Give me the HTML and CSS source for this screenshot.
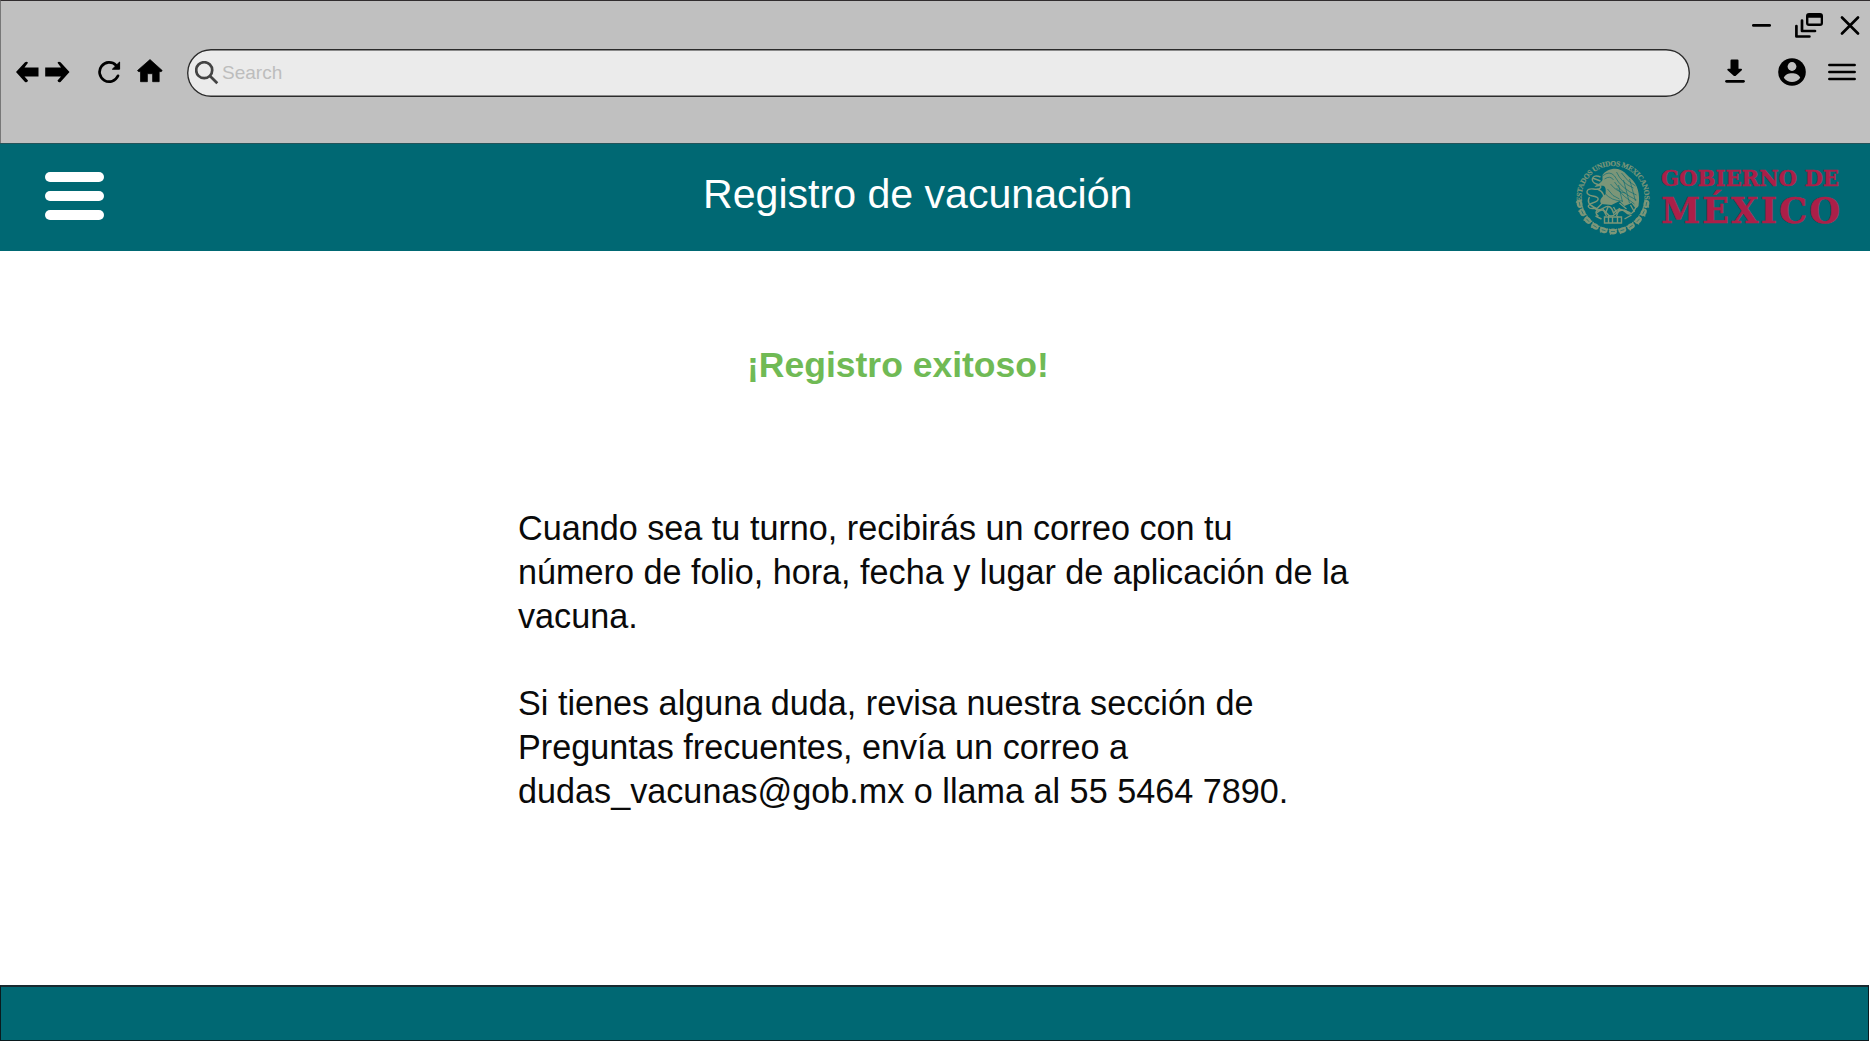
FILE: index.html
```html
<!DOCTYPE html>
<html lang="es">
<head>
<meta charset="utf-8">
<title>Registro de vacunación</title>
<link rel="stylesheet" href="styles.css">
</head>
<body>
<div class="page">
  <div class="browser">
    <div class="window-controls">
      <svg width="19" height="28" viewBox="0 0 19 28"><path d="M1.3 14.4h16.4" class="line"/></svg>
      <svg width="28" height="28" viewBox="0 0 28 28"><path fill-rule="evenodd" d="M14 2h11a3 3 0 0 1 3 3v7a3 3 0 0 1-3 3H14a3 3 0 0 1-3-3V5a3 3 0 0 1 3-3zM13.400 6.700V12.600H25.700V6.700z"/><path d="M7 9.500v10.500h13M1.400 15v10.500h13" class="line"/></svg>
      <svg width="20" height="28" viewBox="0 0 20 28"><path d="M2 6.500 18 22.500M18 6.500 2 22.500" class="line"/></svg>
    </div>
    <div class="toolbar">
      <svg class="arrows" width="54" height="22" viewBox="0 0 54 22"><path d="M0 11 9 1.200Q11 0 12 1.800L8.500 6.500H22.500V15.500H8.500L12 19.500Q11.500 22 9 21z"/><path d="M53.500 11 44.500 1.200Q42.500 0 41.500 1.800L45 6.500H29.200V15.500H45L41.500 19.500Q42 22 44.500 21z"/></svg>
      <svg class="reload" width="24" height="24" viewBox="0 0 24 24"><path d="M20 15.800A9.600 9.600 0 1 1 18 5.300L20 7.400" class="line"/><path d="M21.600 2V9.200H14.400z" stroke="#000" stroke-linejoin="round"/></svg>
      <svg class="home" width="26" height="24" viewBox="0 0 26 24"><path d="M13 0.500 25.200 11.500Q25 13 22.200 12.700V22.700H15.600V14.700H10.400V22.700H3.500V12.700Q.8 13 .5 11.500z" stroke="#000" stroke-linejoin="round" stroke-width=".7"/></svg>
      <div class="search">
        <svg width="24" height="24" viewBox="0 0 24 24"><circle cx="9.200" cy="9.200" r="8" class="glass"/><path d="M15 15l7.300 7.300" class="glass"/></svg>
        <span>Search</span>
      </div>
      <svg class="download" width="20" height="24" viewBox="0 0 20 24"><path d="M5.500 1.500Q5.500.6 6.500.6h6q1 0 1 .9V9.700h2.800q1.200.4.500 1.500L10.500 17h-1.500L2.500 11.200q-.7-1.100.5-1.500H5.500z"/><path d="M1.500 22.300h17" class="line"/></svg>
      <svg class="user" width="28" height="28" viewBox="0 0 28 28"><circle cx="14" cy="14" r="13.800"/><circle cx="14" cy="8.500" r="4.400" class="hole"/><path class="hole" d="M5.800 19.700C8 13.800 20 13.800 22.200 19.700 18 25.500 10 25.500 5.800 19.700z"/></svg>
      <svg class="menu" width="28" height="20" viewBox="0 0 28 20"><path d="M1.400 3h25.200M1.400 10h25.200M1.400 17h25.200" class="line"/></svg>
    </div>
  </div>

  <header class="site-header">
    <div class="burger"><i></i><i></i><i></i></div>
    <h1>Registro de vacunación</h1>
    <svg class="gob" width="270" height="80" viewBox="0 0 270 80">
      <defs>
        <path id="ring" d="M6.760 43.500A31.500 31.500 0 1 1 69.240 43.500"/>
        <g id="leaf"><ellipse cx="38" cy="73.500" rx="4" ry="2.900"/><path d="M34 71l3 2M42 71l-3 2M35 76.500l2-2" class="etch"/><path d="M36 73.500h4" class="cut"/></g>
      </defs>
      <g class="seal">
        <text class="ring-text"><textPath href="#ring" textLength="105">ESTADOS UNIDOS MEXICANOS</textPath></text>
        <use href="#leaf"/>
        <use href="#leaf" transform="rotate(16 38 39.500)"/>
        <use href="#leaf" transform="rotate(32 38 39.500)"/>
        <use href="#leaf" transform="rotate(48 38 39.500)"/>
        <use href="#leaf" transform="rotate(64 38 39.500)"/>
        <use href="#leaf" transform="rotate(79 38 39.500)"/>
        <use href="#leaf" transform="rotate(-16 38 39.500)"/>
        <use href="#leaf" transform="rotate(-32 38 39.500)"/>
        <use href="#leaf" transform="rotate(-48 38 39.500)"/>
        <use href="#leaf" transform="rotate(-64 38 39.500)"/>
        <use href="#leaf" transform="rotate(-79 38 39.500)"/>
        <g transform="translate(-1.500 0)">
        <path d="M29 17c3-5 12-8 18-5 5 2 6 5 10 8 7 6 10 16 8 28-1 2-3 3-4 1l-3-4-7 3-5-5-8 4-10-1c-3-3 0-7 4-10 1-7-1-9-5-8l-6 1c2-3 6-3 8-7z"/>
        <path d="M29 18q7-6 12 0M31 21q6-4 9 1M37 26q6 8 15 9M43 14q5 11 17 16M48 15q6 9 14 13M41 18q7 13 22 19M41 24q7 11 22 18M43 30q7 9 18 16M34 31q5 8 12 10M31 35q7 8 18 8M56 21l6 22M50 22l6 23M45 27l4 17" class="cut"/>
        <path d="M27 19c-9-4-11 5-4 7s5 6-3 5-9 6-1 7 7 5 0 7-5 7 4 5M16 39q-4 7 6 11M24 31q9 4 5 13M27 23l-8-3M29 45l-6 6M46 45l7 6M18 47q5 8 12 3t10 5q6-7 12-1t11-6M23 55q6-6 10 0t10 0q6-6 12 0" class="etch"/>
        <path d="M25 51q-5 4 0 7M29 50l4 8M35 48l-3 7M40 49l4 7M46 50l-3 8M50 52l7 3M57 47l4 7M31 59h17v6H31zM35 58v7M39 59v6M44 58v7M28 61l-6-3M51 61l7-4" class="etch"/>
        </g>
      </g>
      <text class="gov" x="86" y="27.500" textLength="178" lengthAdjust="spacingAndGlyphs" font-size="22">GOBIERNO DE</text>
      <text class="gov" x="86" y="65" textLength="181" lengthAdjust="spacingAndGlyphs" font-size="34.500" letter-spacing="2">MÉXICO</text>
    </svg>
  </header>

  <main>
    <h2>¡Registro exitoso!</h2>
    <div class="message">
      <p>Cuando sea tu turno, recibirás un correo con tu<br>número de folio, hora, fecha y lugar de aplicación de la<br>vacuna.</p>
      <p>Si tienes alguna duda, revisa nuestra sección de<br>Preguntas frecuentes, envía un correo a<br>dudas_vacunas@gob.mx o llama al 55 5464 7890.</p>
    </div>
  </main>
  <footer></footer>
</div>
</body>
</html>
```
FILE: styles.css
```css
* { box-sizing: border-box; }
body { margin: 0; background: #fff; font-family: "Liberation Sans", Arial, sans-serif; }
svg { display: block; flex: none; }
h1, h2, p { margin: 0; }
.page { width: 1870px; height: 1041px; display: flex; flex-direction: column; overflow: hidden; }
.line { fill: none; stroke: #000; stroke-width: 2.7; stroke-linecap: round; stroke-linejoin: round; }

.browser { height: 143px; flex: none; background: #c0c0c0; border-top: 1px solid #302c2e; border-left: 1px solid #777; }
.window-controls { display: flex; justify-content: flex-end; height: 48px; padding: 10px 10px 0 0; }
.window-controls svg:nth-child(2) { margin: 0 17px 0 24px; }
.toolbar { display: flex; align-items: center; height: 46px; padding-left: 15px; }
.reload { margin-left: 27.500px; }
.home { margin-left: 15.500px; margin-top: -2px; }
.search { width: 1503px; height: 48px; margin: 2px 0 0 24px; padding-left: 8px; display: flex; align-items: center; gap: 3px; box-shadow: inset 0 0 0 1.400px #2b2b2b; border-radius: 24px; background: #ebebeb; color: #bdbdbd; font-size: 19px; flex: none; }
.glass { fill: none; stroke: #444; stroke-width: 2.700; }
.download { margin-left: 35px; margin-top: -3px; }
.user { margin-left: 33px; }
.hole { fill: #c0c0c0; }
.menu { margin-left: 22px; }

.site-header { height: 108px; flex: none; background: #006873; border-top: 1px solid #24545a; display: flex; color: #fff; }
.burger { width: 59px; margin: 28px 0 0 45px; display: flex; flex-direction: column; gap: 9px; }
.burger i { height: 10px; border-radius: 5px; background: #fff; }
.site-header h1 { width: 867px; margin: 26px 0 0 599px; font-size: 41.100px; line-height: 48px; font-weight: 400; white-space: nowrap; }
.gob { margin: 14px 0 0 5px; overflow: visible; }
.gov { font-family: "DejaVu Serif", serif; font-weight: 700; fill: #ab1f48; stroke: #ab1f48; stroke-width: .5; }
.seal { fill: #7c9678; }
.ring-text { font: 700 7.500px "Liberation Serif", serif; stroke: #7c9678; stroke-width: .2; }
.etch { fill: none; stroke: #7c9678; stroke-width: 1.400; }
.cut { fill: none; stroke: #006873; stroke-width: .6; }

main { flex: 1; }
h2 { margin: 94px 0 0 747px; color: #70ba55; font-size: 35.500px; line-height: 40px; font-weight: 700; }
.message { margin: 122px 0 0 518px; display: flex; flex-direction: column; gap: 43.800px; font-size: 34.200px; line-height: 43.800px; color: #0a0a0a; white-space: nowrap; }
footer { height: 56px; width: 1869px; flex: none; background: #006873; border: 1px solid #0a1a1e; border-top: 2px solid #182a30; }
```
